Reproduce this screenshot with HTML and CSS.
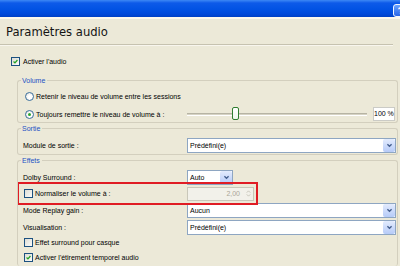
FILE: index.html
```html
<!DOCTYPE html>
<html lang="fr">
<head>
<meta charset="utf-8">
<title>Paramètres audio</title>
<link rel="stylesheet" href="styles.css">
</head>
<body>
<div class="titlebar"><span class="help"><svg viewBox="0 0 10 10"><path d="M3.2 3.6 C3.2 1.6 6.8 1.6 6.8 3.6 C6.8 5 5 5 5 6.4"/><circle cx="5" cy="8.3" r="0.8"/></svg></span></div>
<div class="glow"></div>
<h1 class="title">Paramètres audio</h1>
<div class="sep"></div>

<div class="row top-chk"><span class="chk on"><svg viewBox="0 0 9 9"><path d="M2 4.5 L3.8 6.3 L7 2.6"/></svg></span><span class="txt-top">Activer l'audio</span></div>

<section class="group g-volume">
  <div class="ghead"><span class="gcorner"></span><span class="glabel">Volume</span><span class="gline"></span></div>
  <div class="gbody vol-body">
    <div class="row"><span class="radio"></span><span class="rtxt">Retenir le niveau de volume entre les sessions</span></div>
    <div class="row">
      <div class="lab"><span class="radio on"></span><span class="rtxt">Toujours remettre le niveau de volume à :</span></div>
      <div class="slider"><span class="track"></span><span class="thumb"></span></div>
      <span class="pct">100 %</span>
    </div>
  </div>
</section>

<section class="group">
  <div class="ghead"><span class="gcorner"></span><span class="glabel">Sortie</span><span class="gline"></span></div>
  <div class="gbody out-body">
    <div class="row">
      <div class="lab">Module de sortie :</div>
      <div class="combo"><span>Prédéfini(e)</span><span class="drop"><svg viewBox="0 0 8 6"><path d="M1.5 1.5 L4 4 L6.5 1.5"/></svg></span></div>
    </div>
  </div>
</section>

<section class="group">
  <div class="ghead"><span class="gcorner"></span><span class="glabel">Effets</span><span class="gline"></span></div>
  <div class="gbody fx-body">
    <div class="row r-dolby">
      <div class="lab">Dolby Surround :</div>
      <div class="combo small"><span>Auto</span><span class="drop"><svg viewBox="0 0 8 6"><path d="M1.5 1.5 L4 4 L6.5 1.5"/></svg></span></div>
    </div>
    <div class="row r-norm">
      <div class="lab"><span class="chk"></span><span class="ctxt">Normaliser le volume à :</span></div>
      <div class="spin"><span class="spin-val">2,00</span><span class="spin-arrows"><svg viewBox="0 0 8 10"><path d="M2 4 L4 2 L6 4 M2 6 L4 8 L6 6"/></svg></span></div>
      <span class="redbox"></span>
    </div>
    <div class="row r-replay">
      <div class="lab">Mode Replay gain :</div>
      <div class="combo"><span>Aucun</span><span class="drop"><svg viewBox="0 0 8 6"><path d="M1.5 1.5 L4 4 L6.5 1.5"/></svg></span></div>
    </div>
    <div class="row r-visu">
      <div class="lab">Visualisation :</div>
      <div class="combo"><span>Prédéfini(e)</span><span class="drop"><svg viewBox="0 0 8 6"><path d="M1.5 1.5 L4 4 L6.5 1.5"/></svg></span></div>
    </div>
    <div class="row r-surr"><span class="chk"></span><span class="ctxt">Effet surround pour casque</span></div>
    <div class="row r-stretch"><span class="chk on"><svg viewBox="0 0 9 9"><path d="M2 4.5 L3.8 6.3 L7 2.6"/></svg></span><span class="ctxt">Activer l'étirement temporel audio</span></div>
  </div>
</section>
</body>
</html>
```
FILE: styles.css
```css
html, body {
  margin: 0;
  padding: 0;
}
body {
  width: 400px;
  height: 266px;
  overflow: hidden;
  background: #ece9d8;
  font-family: "Liberation Sans", Arial, sans-serif;
  font-size: 7px;
  color: #000;
}
.titlebar {
  height: 17px;
  background: linear-gradient(#3d88f5 0, #0d5ae9 3px, #0253e4 9px, #0049da 14px, #0040c4 17px);
  display: flex;
  justify-content: flex-end;
  align-items: center;
  overflow: hidden;
}
.help {
  box-sizing: border-box;
  width: 15px;
  height: 13px;
  margin-right: -8px;
  margin-top: 3px;
  border: 1px solid #f4f7ff;
  border-radius: 3px;
  background: linear-gradient(#6aa4ff, #2a66e8);
  display: flex;
  align-items: center;
  justify-content: center;
}
.help svg {
  width: 9px;
  height: 9px;
  fill: #fff;
}
.help path {
  fill: none;
  stroke: #fff;
  stroke-width: 1.6;
}
.glow {
  height: 2px;
  background: #fdf8ec;
}
.title {
  margin: 0;
  height: 25px;
  line-height: 26px;
  padding-left: 6px;
  font-family: "DejaVu Sans", Verdana, sans-serif;
  font-size: 11.6px;
  font-weight: normal;
  color: #141414;
}
.sep {
  width: 393px;
  height: 1px;
  background: #c6c2b0;
  border-bottom: 1px solid #f8f6ee;
}
.row {
  display: flex;
  align-items: center;
  height: 16px;
  white-space: nowrap;
}
.top-chk {
  margin: 7px 0 0 11px;
}
.txt-top {
  margin-left: 3px;
}
.chk {
  box-sizing: border-box;
  width: 9px;
  height: 9px;
  border: 1px solid #1c5180;
  background: linear-gradient(135deg, #dcdcd5, #fbfbf9);
  display: inline-flex;
  flex: none;
}
.chk svg {
  width: 100%;
  height: 100%;
  fill: none;
  stroke: #21a121;
  stroke-width: 1.6;
}
.radio {
  box-sizing: border-box;
  width: 9px;
  height: 9px;
  border: 1px solid #3a6f9e;
  border-radius: 50%;
  background: radial-gradient(circle at 60% 60%, #fff 30%, #dcdcd5 100%);
  margin-left: 2px;
  flex: none;
  display: inline-flex;
  align-items: center;
  justify-content: center;
}
.radio.on::after {
  content: "";
  width: 3px;
  height: 3px;
  border-radius: 50%;
  background: #2ca52c;
}
.rtxt {
  margin-left: 2px;
}
.ctxt {
  margin-left: 2px;
}
.group {
  margin-left: 17px;
  margin-right: 2px;
}
.g-volume {
  margin-top: 6px;
}
.ghead {
  display: flex;
  height: 10px;
  align-items: center;
}
.gcorner {
  box-sizing: border-box;
  width: 4px;
  height: 5px;
  align-self: flex-end;
  border-left: 1px solid #d3cfbe;
  border-top: 1px solid #d3cfbe;
  border-top-left-radius: 3px;
}
.glabel {
  color: #2351c4;
  padding: 0 2px 0 1px;
}
.gline {
  flex: 1;
  box-sizing: border-box;
  height: 5px;
  align-self: flex-end;
  border-top: 1px solid #d3cfbe;
  border-right: 1px solid #d3cfbe;
  border-top-right-radius: 3px;
}
.gbody {
  border: 1px solid #d3cfbe;
  border-top: none;
  border-radius: 0 0 3px 3px;
  padding: 0 1px 0 5px;
}
.vol-body {
  padding-top: 3px;
  display: flex;
  flex-direction: column;
  gap: 2px;
}
.out-body {
  padding-top: 4px;
  padding-bottom: 1px;
}
.fx-body {
  box-sizing: border-box;
  padding-top: 4px;
  height: 101px;
  border-bottom: none;
  overflow: hidden;
}
.lab {
  width: 164px;
  flex: none;
  display: flex;
  align-items: center;
}
.slider {
  position: relative;
  width: 180px;
  height: 14px;
  display: flex;
  align-items: center;
}
.track {
  width: 100%;
  height: 1px;
  background: #d6d3c4;
  border-top: 1px solid #b7b4a4;
  border-bottom: 1px solid #fff;
}
.thumb {
  position: absolute;
  left: 45px;
  top: 0;
  box-sizing: border-box;
  width: 7px;
  height: 13px;
  border: 1px solid #2f7d2f;
  border-radius: 2px;
  background: linear-gradient(#ffffff, #eef7ec);
}
.pct {
  box-sizing: border-box;
  margin-left: 6px;
  width: 22px;
  height: 14px;
  border: 1px solid #cbcbc6;
  background: #fff;
  text-align: right;
  padding-right: 2px;
  line-height: 12px;
}
.combo {
  flex: 1;
  box-sizing: border-box;
  height: 15px;
  border: 1px solid #8ea6c2;
  background: #fff;
  display: flex;
  align-items: center;
  padding-left: 2px;
}
.combo.small {
  flex: none;
  width: 46px;
}
.drop {
  margin-left: auto;
  width: 12px;
  height: 13px;
  border-radius: 2px;
  background: linear-gradient(#e3ebfd, #b6cbf8);
  display: flex;
  align-items: center;
  justify-content: center;
}
.drop svg {
  width: 7px;
  height: 5px;
  fill: none;
  stroke: #45608f;
  stroke-width: 1.6;
}
.r-dolby {
  height: 16px;
}
.r-norm {
  position: relative;
  height: 17px;
}
.r-norm .chk {
  margin-left: 1px;
}
.spin {
  box-sizing: border-box;
  width: 67px;
  height: 14px;
  border: 1px solid #c9c7b9;
  background: #f2f1ea;
  display: flex;
  align-items: center;
  color: #aaa697;
}
.spin-val {
  flex: 1;
  text-align: right;
  padding-right: 3px;
}
.spin-arrows {
  width: 10px;
  height: 12px;
  display: flex;
  align-items: center;
  justify-content: center;
}
.spin-arrows svg {
  width: 7px;
  height: 9px;
  fill: none;
  stroke: #c2bfb2;
  stroke-width: 1;
}
.redbox {
  position: absolute;
  left: -6px;
  top: -3px;
  width: 241px;
  height: 23px;
  box-sizing: border-box;
  border: 2px solid #e01c24;
}
.r-replay {
  height: 16px;
}
.r-visu {
  margin-top: 1px;
  height: 16px;
}
.r-surr {
  height: 14px;
}
.r-surr .chk, .r-stretch .chk {
  margin-left: 1px;
}
.r-stretch {
  height: 16px;
}
```
